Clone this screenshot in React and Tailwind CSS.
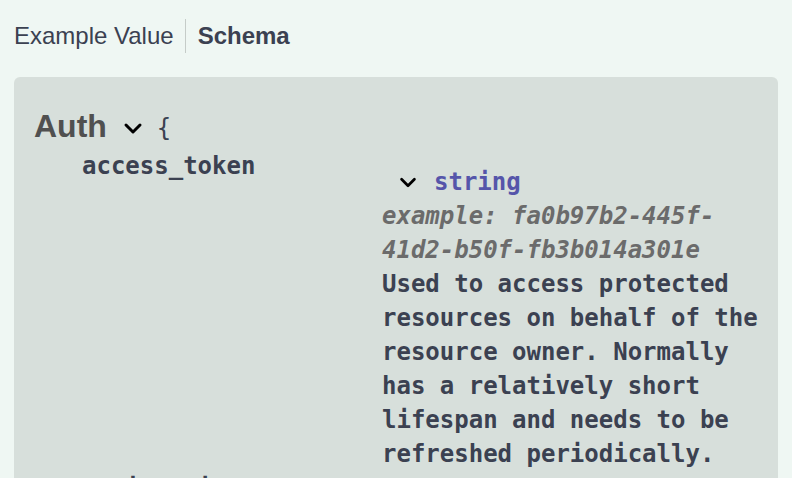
import React from 'react'

function Chevron({ className }) {
  return (
    <svg className={className} viewBox="0 0 20 12" fill="none" stroke="#000" strokeWidth={3} strokeLinecap="round" strokeLinejoin="round">
      <path d="M3 2.5 L10 9.5 L17 2.5" />
    </svg>
  )
}

const description =
  'Used to access protected resources on behalf of the resource owner. Normally has a relatively short lifespan and needs to be refreshed periodically.'

export default function App() {
  return (
    <div className="w-[792px] h-[478px] overflow-hidden bg-[#eff7f3] text-[#3b4151] font-['Liberation_Sans',Arial,sans-serif]">
      {/* tabs */}
      <div className="mt-[19px] flex h-[34px] items-center text-[24px] leading-[34px]">
        <div className="pl-[14px] pr-[11px]">Example Value</div>
        <div className="h-full border-l border-[#c5ccc8] pl-[12px] font-bold">Schema</div>
      </div>

      {/* model box */}
      <div className="mt-[24px] ml-[14px] w-[764px] h-[420px] rounded-[6px] bg-[#d7dfdb] pl-[20px] pt-[29px]">
        <div className="flex h-[40px] items-center">
          <span className="text-[32px] leading-[40px] font-bold text-[#505050]">Auth</span>
          <Chevron className="ml-[16px] mt-[5px] w-[20px] h-[13px]" />
          <span className="ml-[14px] mt-[4px] font-['DejaVu_Sans_Mono',monospace] text-[24px] leading-[34px] text-[#3b4151]">{'{'}</span>
        </div>

        <div className="mt-[3px] pl-[48px] font-['DejaVu_Sans_Mono',monospace] text-[24px] leading-[34px] font-bold">
          <div className="flex">
            <div className="w-[300px] shrink-0">access_token</div>
            <div className="w-[384px] pt-[16px]">
              <div className="flex h-[34px] items-center">
                <Chevron className="ml-[16px] w-[20px] h-[11px]" />
                <span className="ml-[16px] text-[#5555aa]">string</span>
              </div>
              <div className="italic text-[#6b6b6b]">example: fa0b97b2-445f-41d2-b50f-fb3b014a301e</div>
              <div>{description}</div>
            </div>
          </div>
          <div className="flex">
            <div className="w-[300px] shrink-0">expires_in</div>
          </div>
        </div>
      </div>
    </div>
  )
}
